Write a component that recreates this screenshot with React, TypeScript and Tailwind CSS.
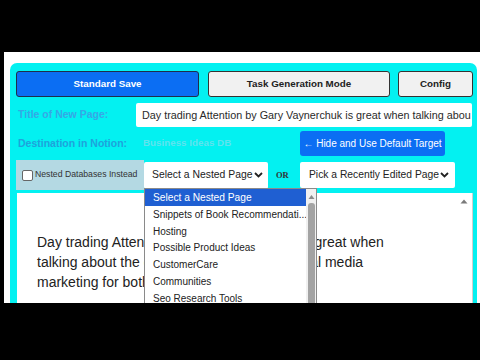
import React from "react";

const Chevron = () => (
  <svg width="9" height="6" viewBox="0 0 9 6" className="shrink-0">
    <path d="M1 1 L4.5 4.5 L8 1" fill="none" stroke="#222" strokeWidth="1.8" />
  </svg>
);

export default function App() {
  const items = [
    "Snippets of Book Recommendati...",
    "Hosting",
    "Possible Product Ideas",
    "CustomerCare",
    "Communities",
    "Seo Research Tools",
  ];
  return (
    <div
      className="w-[480px] h-[360px] bg-black overflow-hidden pt-[52px] pl-[4px]"
      style={{ fontFamily: '"Liberation Sans", Arial, sans-serif' }}
    >
      <div className="bg-white h-[251px] pl-[6px] pr-[3px] pt-[11px] overflow-hidden">
        <div className="bg-[#03f1f1] rounded-t-[7px] h-[300px] pl-[6px] pr-[4px] pt-[8px] flex flex-col">
          {/* Row 1 */}
          <div className="flex h-[26px]">
            <div className="w-[183px] h-full bg-[#0b6ef3] border border-[#1d2f4b] rounded-[3px] flex items-center justify-center text-white font-bold text-[9.8px]">
              Standard Save
            </div>
            <div className="ml-[9px] w-[182px] h-full bg-[#f1f1f1] border border-[#333] rounded-[3px] flex items-center justify-center text-[#222] font-bold text-[9.8px]">
              Task Generation Mode
            </div>
            <div className="ml-[8px] w-[75px] h-full bg-[#f1f1f1] border border-[#333] rounded-[3px] flex items-center justify-center text-[#222] font-bold text-[9.8px]">
              Config
            </div>
          </div>
          {/* Row 2 */}
          <div className="flex items-center h-[24px] mt-[6px]">
            <div className="w-[120px] pl-[2px] text-[10.5px] font-bold text-[#35a8e6]">
              Title of New Page:
            </div>
            <div className="w-[336px] h-full bg-white rounded-[2px] flex items-center pl-[6px] overflow-hidden whitespace-nowrap text-[10.8px] text-[#2a2a2a]">
              Day trading Attention by Gary Vaynerchuk is great when talking abou
            </div>
          </div>
          {/* Row 3 */}
          <div className="flex items-center h-[25px] mt-[4px]">
            <div className="w-[127px] pl-[2px] text-[10.5px] font-bold text-[#1ea3dc]">
              Destination in Notion:
            </div>
            <div className="w-[157px] text-[9.8px] font-bold text-[#5fe3ee]">
              Business Ideas DB
            </div>
            <div className="w-[145px] h-full bg-[#0b6ef3] rounded-[3px] flex items-center justify-center text-white text-[10px]">
              ← Hide and Use Default Target
            </div>
          </div>
          {/* Row 4 */}
          <div className="relative flex items-center h-[30px] mt-[4px]">
            <div className="w-[128px] h-full bg-[#b4d9e3] flex items-center pl-[6px] gap-[2px] text-[8.7px] text-[#333] whitespace-nowrap">
              <div className="w-[11px] h-[11px] bg-white border border-[#666] rounded-[2px] shrink-0" />
              <span>Nested Databases Instead</span>
            </div>
            <div className="w-[124px] h-[27px] bg-white rounded-[2px] flex items-center justify-between pl-[8px] pr-[5px] text-[10.4px] text-[#222]">
              <span className="whitespace-nowrap">Select a Nested Page</span>
              <Chevron />
            </div>
            <div
              className="ml-[8px] w-[24px] text-[8.5px] font-bold text-[#333]"
              style={{ fontFamily: '"Liberation Serif", serif' }}
            >
              OR
            </div>
            <div className="w-[155px] h-[26px] bg-white rounded-[2px] flex items-center justify-between pl-[9px] pr-[6px] text-[10.3px] text-[#222]">
              <span className="whitespace-nowrap">Pick a Recently Edited Page</span>
              <Chevron />
            </div>

            {/* dropdown list overlay */}
            <div className="absolute left-[128px] top-[28px] w-[173px] h-[130px] bg-white border border-[#8a8a8a] flex z-10">
              <div className="flex-1 min-w-0 flex flex-col text-[10px] text-[#222] overflow-hidden">
                <div className="h-[17px] shrink-0 bg-[#1f5fd2] text-white flex items-center pl-[8px] whitespace-nowrap text-[10.2px]">
                  Select a Nested Page
                </div>
                {items.map((t) => (
                  <div key={t} className="h-[16.8px] shrink-0 flex items-center pl-[8px] whitespace-nowrap">
                    {t}
                  </div>
                ))}
              </div>
              <div className="w-[10px] bg-[#f0f0f0] flex flex-col items-center shrink-0">
                <svg width="7" height="6" viewBox="0 0 7 6" className="mt-[5px]">
                  <path d="M0.5 5 L3.5 1 L6.5 5 Z" fill="#8a8a8a" />
                </svg>
                <div className="mt-[3px] w-[7px] flex-1 bg-[#a3a3a3] rounded-[3px]" />
              </div>
            </div>
          </div>
          {/* Textarea */}
          <div className="relative ml-[1px] mt-[3px] w-[456px] h-[120px] bg-white border-r border-[#d0d0d0] pt-[39px] pl-[20px]">
            <div className="w-[356px] text-[14px] leading-[20px] text-[#222]">
              Day trading Attention by Gary Vaynerchuk is great when talking about the growing importance of social media marketing for both brands and people.
            </div>
            <svg width="8" height="5" viewBox="0 0 8 5" className="absolute right-[4px] top-[6px]">
              <path d="M0.5 4.5 L4 0.5 L7.5 4.5 Z" fill="#7a7a7a" />
            </svg>
          </div>
        </div>
      </div>
    </div>
  );
}
